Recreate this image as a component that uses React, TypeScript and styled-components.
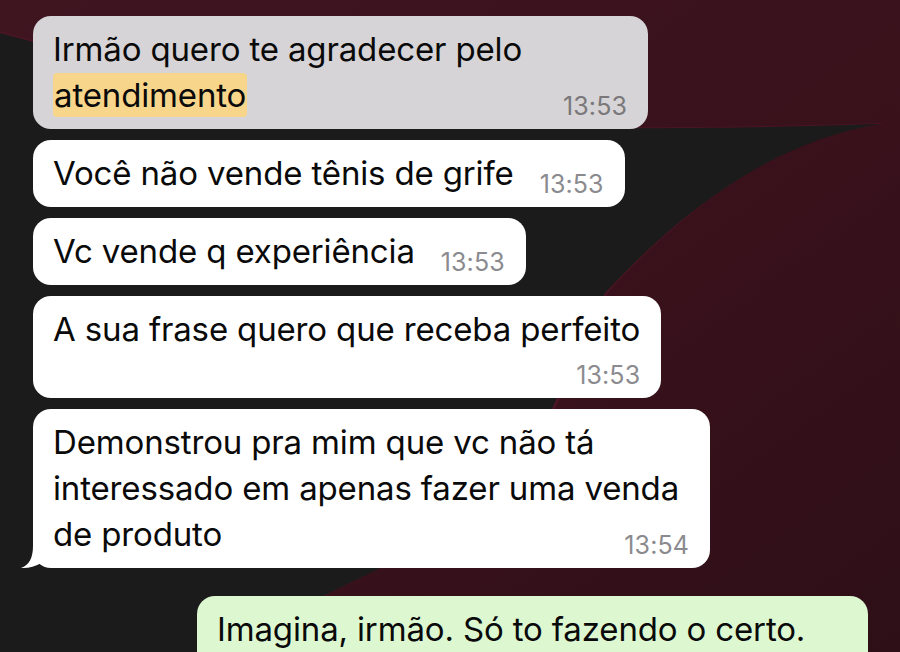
import React from "react";
import styled, { createGlobalStyle, css } from "styled-components";

const GlobalStyle = createGlobalStyle`
  html, body { margin: 0; padding: 0; background: #1b1b1b; }
  * { box-sizing: border-box; }
`;

const wallpaperSvg = `<svg xmlns='http://www.w3.org/2000/svg' width='900' height='652' viewBox='0 0 900 652'>
<defs>
<linearGradient id='m' x1='0' y1='0' x2='1' y2='1'>
<stop offset='0' stop-color='#3f1520'/><stop offset='0.6' stop-color='#38111b'/><stop offset='1' stop-color='#2e0f17'/>
</linearGradient>
</defs>
<rect width='900' height='652' fill='url(#m)'/>
<path d='M0,31 C170,78 380,124 600,127 C720,128 810,125 885,123 C770,140 680,215 610,290 C572,345 565,430 490,500 C410,570 310,585 250,652 L0,652 Z' fill='#4a1524'/>
<path d='M0,33 C170,80 380,126 600,128 C720,129 810,126 880,124 C768,142 676,217 606,292 C568,347 561,432 486,502 C406,572 306,587 246,652 L0,652 Z' fill='#1b1b1b'/>
</svg>`;

const wallpaper = `url("data:image/svg+xml,${encodeURIComponent(wallpaperSvg)}")`;

const Page = styled.div`
  width: 900px;
  height: 652px;
  overflow: hidden;
  background-color: #1b1b1b;
  background-image: ${wallpaper};
  background-repeat: no-repeat;
  padding: 16px 32px 0 33px;
  display: flex;
  flex-direction: column;
  gap: 11px;
  font-family: Inter, "Noto Sans", sans-serif;
`;

type Variant = "selected" | "in" | "out";

const bubbleColors: Record<Variant, string> = {
  selected: "#d6d4d6",
  in: "#ffffff",
  out: "#ddf8d1",
};

const Bubble = styled.div<{ $variant: Variant; $width?: number }>`
  position: relative;
  display: flow-root;
  width: ${(p) => (p.$width ? `${p.$width}px` : "fit-content")};
  max-width: 677px;
  padding: 10px 21px 11px 20px;
  border-radius: 18px;
  background: ${(p) => bubbleColors[p.$variant]};
  color: #0a0a0a;
  font-size: 33px;
  line-height: 46px;
  letter-spacing: -0.15px;
  align-self: ${(p) => (p.$variant === "out" ? "flex-end" : "flex-start")};
  ${(p) =>
    p.$variant === "out" &&
    css`
      margin-top: 17px;
    `}
`;

const Time = styled.span<{ $variant: Variant; $below?: boolean }>`
  font-size: 25px;
  line-height: 24px;
  letter-spacing: 0.1px;
  color: ${(p) => (p.$variant === "selected" ? "#7a787a" : "#8b8b8f")};
  ${(p) =>
    p.$below
      ? css`
          display: block;
          text-align: right;
          margin-top: 11px;
        `
      : css`
          float: right;
          margin: 22px 0 0 26px;
        `}
`;

const Mark = styled.mark`
  background: #f7d68c;
  color: inherit;
  border-radius: 4px;
  padding: 2px 1px;
`;

const Tail = styled.svg`
  position: absolute;
  left: -12px;
  bottom: 0;
  width: 24px;
  height: 24px;
  overflow: visible;
`;

type Message = {
  id: number;
  variant: Variant;
  content: React.ReactNode;
  time: string;
  width?: number;
  below?: boolean;
  tail?: boolean;
};

const messages: Message[] = [
  {
    id: 1,
    variant: "selected",
    content: (
      <>
        Irmão quero te agradecer pelo <Mark>atendimento</Mark>
      </>
    ),
    time: "13:53",
    width: 615,
  },
  { id: 2, variant: "in", content: "Você não vende tênis de grife", time: "13:53" },
  { id: 3, variant: "in", content: "Vc vende q experiência", time: "13:53" },
  {
    id: 4,
    variant: "in",
    content: "A sua frase quero que receba perfeito",
    time: "13:53",
    below: true,
  },
  {
    id: 5,
    variant: "in",
    content: "Demonstrou pra mim que vc não tá interessado em apenas fazer uma venda de produto",
    time: "13:54",
    tail: true,
  },
  {
    id: 6,
    variant: "out",
    content: "Imagina, irmão. Só to fazendo o certo.",
    time: "13:54",
    width: 671,
    below: true,
  },
];

function MessageBubble({ m }: { m: Message }) {
  return (
    <Bubble $variant={m.variant} $width={m.width}>
      {m.content}
      <Time $variant={m.variant} $below={m.below}>
        {m.time}
      </Time>
      {m.tail && (
        <Tail viewBox="0 0 24 24" aria-hidden="true">
          <path
            d="M12 0 L12 2 C12 14 8 21 0 24 C7 24.6 14 22.5 19.5 19.6 L26 12 L26 0 Z"
            fill={bubbleColors[m.variant]}
          />
        </Tail>
      )}
    </Bubble>
  );
}

export default function App() {
  return (
    <>
      <GlobalStyle />
      <Page>
        {messages.map((m) => (
          <MessageBubble key={m.id} m={m} />
        ))}
      </Page>
    </>
  );
}
